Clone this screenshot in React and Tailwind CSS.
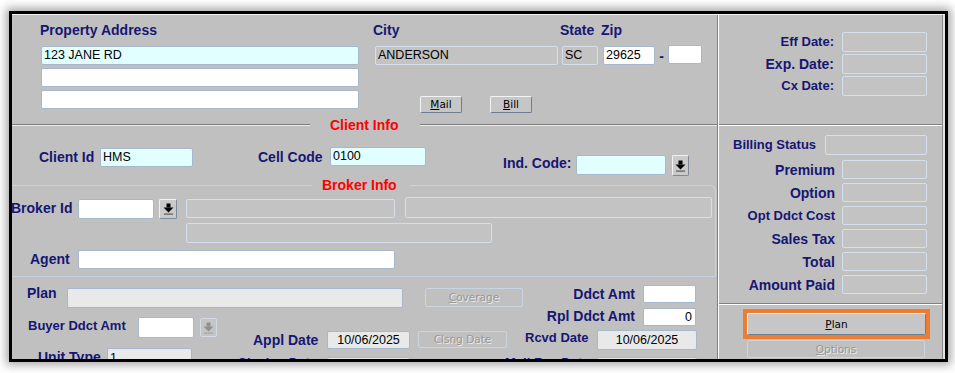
import React from "react";

const tones = {
  cyan: "bg-[#e2ffff] border-[#a8b8cc]",
  white: "bg-white border-[#a8b8cc]",
  gray: "bg-[#c3c3c3] border-[#d6e0ec]",
  light: "bg-[#e9e9e9] border-[#a8b8cc]",
};

function Field({ tone = "white", align = "left", className = "", children }) {
  const alignCls =
    align === "right"
      ? "justify-end pr-[3px]"
      : align === "center"
      ? "justify-center"
      : "pl-[2px]";
  return (
    <div
      className={`flex shrink-0 items-center overflow-hidden rounded-[2px] border text-[12.5px] leading-none text-black ${tones[tone]} ${alignCls} ${className}`}
    >
      {children}
    </div>
  );
}

function Label({ small = false, className = "", children }) {
  const size = small ? "text-[13px]" : "text-[14px]";
  return (
    <span
      className={`block shrink-0 whitespace-nowrap font-bold leading-[16px] text-[#161673] ${size} ${className}`}
    >
      {children}
    </span>
  );
}

function Btn({ disabled = false, u = "", rest = "", className = "" }) {
  const look = disabled
    ? "bg-[#c0c0c0] border-[#cad5e2] text-[#979797] [text-shadow:1px_1px_0_#ececec]"
    : "bg-[#c6c6c6] border-t-[#f4f4f4] border-l-[#f4f4f4] border-r-[#6f7d90] border-b-[#6f7d90] text-black";
  return (
    <div
      className={`flex shrink-0 items-center justify-center rounded-[2px] border font-['DejaVu_Sans',sans-serif] text-[10.5px] leading-none ${look} ${className}`}
    >
      {u && <span className="underline">{u}</span>}
      {rest}
    </div>
  );
}

function Lov({ disabled = false, className = "" }) {
  const c = disabled ? "#8f8f8f" : "#000000";
  const bar = disabled ? "#a5a5a5" : "#5a5a5a";
  return (
    <div
      className={`flex shrink-0 items-center justify-center rounded-[2px] border ${
        disabled
          ? "border-[#d2dbe6] bg-[#c4c4c4]"
          : "border-t-[#f2f2f2] border-l-[#f2f2f2] border-r-[#7d8898] border-b-[#7d8898] bg-[#cacaca]"
      } ${className}`}
    >
      <svg width="11" height="12" viewBox="0 0 11 12">
        <rect x="3.5" y="0.5" width="4" height="4" fill={c} />
        <path d="M0.5 4.5h10l-5 5z" fill={c} />
        <rect x="1" y="10.5" width="9" height="1.2" fill={bar} />
      </svg>
    </div>
  );
}

function Etched({ className = "" }) {
  return (
    <div
      className={`h-[2px] border-t border-b border-t-[#7c7c7c] border-b-[#ececec] ${className}`}
    />
  );
}

export default function App() {
  return (
    <div className="h-[373px] w-[955px] overflow-hidden bg-white pl-[9px] pt-[11px] font-['Liberation_Sans',Arial,sans-serif]">
      <div className="h-[351px] w-[939px] overflow-hidden border-[3px] border-black bg-[#c0c0c0] shadow-[0_0_9px_3px_rgba(0,0,0,0.35)]">
        <div className="flex h-full border-t border-t-[#efefef]">
          {/* Left panel */}
          <div className="w-[706px] shrink-0 border-r border-r-[#7f7f7f]">
            {/* Address */}
            <div className="flex h-[102px] pl-[29px] pt-[7px]">
              <div className="w-[318px] shrink-0">
                <Label className="-ml-[1px]">Property Address</Label>
                <Field tone="cyan" className="mt-[8px] h-[19px] w-full">
                  123 JANE RD
                </Field>
                <Field className="mt-[3px] h-[19px] w-full" />
                <Field className="mt-[3px] h-[19px] w-full" />
              </div>
              <div className="ml-[16px] w-[183px] shrink-0">
                <Label className="-ml-[2px]">City</Label>
                <Field tone="gray" className="mt-[8px] h-[19px] w-full">
                  ANDERSON
                </Field>
                <div className="mt-[31px] flex">
                  <Btn u="M" rest="ail" className="ml-[45px] h-[17px] w-[42px]" />
                  <Btn u="B" rest="ill" className="ml-[28px] h-[17px] w-[42px]" />
                </div>
              </div>
              <div className="ml-[4px] w-[36px] shrink-0">
                <Label className="-ml-[2px]">State</Label>
                <Field tone="gray" className="mt-[8px] h-[19px] w-full">
                  SC
                </Field>
              </div>
              <div className="ml-[5px] shrink-0">
                <Label className="-ml-[2px]">Zip</Label>
                <div className="mt-[8px] flex items-center">
                  <Field className="h-[19px] w-[52px]">29625</Field>
                  <span className="w-[13px] text-center text-[14px] font-bold leading-[16px] text-[#161673]">
                    -
                  </span>
                  <Field className="-mt-[2px] h-[19px] w-[34px]" />
                </div>
              </div>
            </div>

            {/* Client Info separator */}
            <div className="flex h-[16px] items-center">
              <Etched className="w-[298px]" />
              <span className="ml-[20px] text-[14px] font-bold leading-[16px] text-[#ff0000]">
                Client Info
              </span>
              <Etched className="ml-[22px] flex-1" />
            </div>

            {/* Client row */}
            <div className="flex h-[44px] items-start">
              <Label className="ml-[27px] mt-[16px] w-[55px]">Client Id</Label>
              <Field tone="cyan" className="ml-[6px] mt-[15px] h-[19px] w-[93px]">
                HMS
              </Field>
              <Label className="ml-[65px] mt-[16px] w-[64px]">Cell Code</Label>
              <Field tone="cyan" className="ml-[8px] mt-[14px] h-[19px] w-[96px]">
                0100
              </Field>
              <Label className="ml-[77px] mt-[22px] w-[67px]">Ind. Code:</Label>
              <Field tone="cyan" className="ml-[6px] mt-[22px] h-[20px] w-[90px]" />
              <Lov className="ml-[6px] mt-[22px] h-[21px] w-[17px]" />
            </div>

            {/* Broker Info */}
            <fieldset className="w-[704px] rounded-tr-[6px] rounded-br-[2px] border-t border-r border-b border-[#c6d2e0] pb-[7px]">
              <legend className="ml-[300px] pl-[10px] pr-[13px] text-[14px] font-bold leading-[16px] text-[#ff0000]">
                Broker Info
              </legend>
              <div className="flex h-[25px] items-start">
                <Label className="-ml-[1px] mt-[7px] w-[59px]">Broker Id</Label>
                <Field className="ml-[8px] mt-[6px] h-[20px] w-[76px]" />
                <Lov className="ml-[5px] mt-[6px] h-[20px] w-[18px]" />
                <Field tone="gray" className="ml-[9px] mt-[6px] h-[19px] w-[209px]" />
                <Field tone="gray" className="ml-[10px] mt-[4px] h-[21px] w-[307px]" />
              </div>
              <Field tone="gray" className="ml-[174px] mt-[5px] h-[20px] w-[306px]" />
              <div className="mt-[7px] flex items-start">
                <Label className="ml-[18px] mt-[1px] w-[40px]">Agent</Label>
                <Field className="ml-[8px] h-[19px] w-[317px]" />
              </div>
            </fieldset>

            {/* Plan */}
            <div className="flex h-[31px] items-start">
              <Label className="ml-[15px] mt-[8px] w-[31px]">Plan</Label>
              <Field tone="light" className="ml-[9px] mt-[11px] h-[20px] w-[336px]" />
              <Btn disabled u="C" rest="overage" className="ml-[22px] mt-[11px] h-[19px] w-[98px]" />
              <Label className="mt-[9px] w-[112px] text-right">Ddct Amt</Label>
              <Field className="ml-[8px] mt-[8px] h-[18px] w-[53px]" />
            </div>
            <div className="flex">
              <div className="w-[225px] shrink-0">
                <div className="flex h-[30px] items-start">
                  <Label small className="ml-[16px] mt-[10px] w-[101px]">
                    Buyer Ddct Amt
                  </Label>
                  <Field className="ml-[9px] mt-[9px] h-[21px] w-[56px]" />
                  <Lov disabled className="ml-[6px] mt-[10px] h-[19px] w-[17px]" />
                </div>
                <div className="mt-[10px] flex items-start">
                  <Label className="ml-[26px] mt-[1px] w-[62px]">Unit Type</Label>
                  <Field tone="light" className="ml-[7px] h-[20px] w-[85px]">
                    1
                  </Field>
                </div>
              </div>
              <div className="flex-1">
                <div className="flex h-[18px]">
                  <Label className="ml-[298px] w-[100px] text-right">Rpl Ddct Amt</Label>
                  <Field align="right" className="ml-[8px] h-[18px] w-[53px] text-[#444]">
                    0
                  </Field>
                </div>
                <div className="flex h-[24px] items-start">
                  <Label className="ml-[16px] mt-[6px] w-[64px]">Appl Date</Label>
                  <Field tone="light" align="center" className="ml-[10px] mt-[5px] h-[18px] w-[83px]">
                    10/06/2025
                  </Field>
                  <Btn disabled rest="Clsng Date" className="ml-[8px] mt-[5px] h-[17px] w-[89px]" />
                  <Label small className="ml-[18px] mt-[4px] w-[63px]">
                    Rcvd Date
                  </Label>
                  <Field tone="light" align="center" className="ml-[9px] mt-[4px] h-[20px] w-[100px]">
                    10/06/2025
                  </Field>
                </div>
                <div className="flex items-start">
                  <Label small className="mt-[5px] w-[80px] text-right">
                    Closing Date
                  </Label>
                  <Field tone="light" className="ml-[10px] mt-[7px] h-[20px] w-[83px]" />
                  <Label small className="ml-[95px] mt-[5px] w-[83px] text-right">
                    Mail Rec Date
                  </Label>
                  <Field tone="light" className="ml-[9px] mt-[7px] h-[20px] w-[100px]" />
                </div>
              </div>
            </div>
          </div>

          {/* Right panel */}
          <div className="w-[225px] shrink-0 border-l border-r border-l-white border-r-[#8a8a8a]">
            <div className="h-[110px] border-b border-b-[#808080] pt-[17px]">
              <div className="flex flex-col gap-[2px]">
                <div className="flex h-[20px] items-center">
                  <Label small className="w-[115px] text-right">Eff Date:</Label>
                  <Field tone="gray" className="ml-[8px] h-[20px] w-[85px]" />
                </div>
                <div className="flex h-[20px] items-center">
                  <Label className="w-[115px] text-right">Exp. Date:</Label>
                  <Field tone="gray" className="ml-[8px] h-[20px] w-[85px]" />
                </div>
                <div className="flex h-[20px] items-center">
                  <Label small className="w-[115px] text-right">Cx Date:</Label>
                  <Field tone="gray" className="ml-[8px] h-[20px] w-[85px]" />
                </div>
              </div>
            </div>

            <div className="h-[179px] border-t border-b border-t-white border-b-[#808080] pt-[9px]">
              <div className="flex h-[20px] items-center">
                <Label small className="ml-[14px] w-[85px]">Billing Status</Label>
                <Field tone="gray" className="ml-[7px] h-[20px] w-[102px]" />
              </div>
              <div className="mt-[5px] flex flex-col gap-[4px]">
                <div className="flex h-[19px] items-center">
                  <Label className="w-[116px] text-right">Premium</Label>
                  <Field tone="gray" className="ml-[7px] h-[19px] w-[85px]" />
                </div>
                <div className="flex h-[19px] items-center">
                  <Label className="w-[116px] text-right">Option</Label>
                  <Field tone="gray" className="ml-[7px] h-[19px] w-[85px]" />
                </div>
                <div className="flex h-[19px] items-center">
                  <Label small className="w-[116px] text-right">Opt Ddct Cost</Label>
                  <Field tone="gray" className="ml-[7px] h-[19px] w-[85px]" />
                </div>
                <div className="flex h-[19px] items-center">
                  <Label className="w-[116px] text-right">Sales Tax</Label>
                  <Field tone="gray" className="ml-[7px] h-[19px] w-[85px]" />
                </div>
                <div className="flex h-[19px] items-center">
                  <Label className="w-[116px] text-right">Total</Label>
                  <Field tone="gray" className="ml-[7px] h-[19px] w-[85px]" />
                </div>
                <div className="flex h-[19px] items-center">
                  <Label className="w-[116px] text-right">Amount Paid</Label>
                  <Field tone="gray" className="ml-[7px] h-[19px] w-[85px]" />
                </div>
              </div>
            </div>

            <div className="border-t border-t-white">
              <div className="ml-[24px] mt-[4px] h-[30px] w-[187px] border-[4px] border-[#ed7d31]">
                <Btn u="P" rest="lan" className="h-full w-full" />
              </div>
              <Btn disabled u="O" rest="ptions" className="ml-[28px] mt-[1px] h-[18px] w-[178px]" />
            </div>
          </div>
          <div className="w-[2px] shrink-0 bg-[#e2e2e2]" />
        </div>
      </div>
    </div>
  );
}
